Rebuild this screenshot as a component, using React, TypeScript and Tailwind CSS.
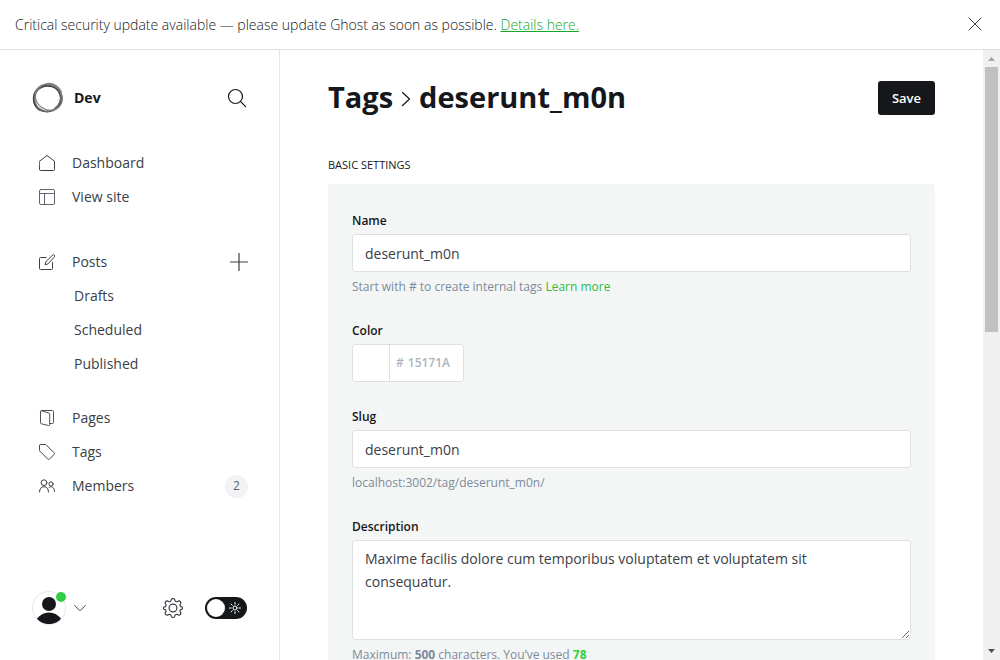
import { useState, type ReactNode } from "react";

function Svg({ className, box = "0 0 16 16", children }: { className: string; box?: string; children: ReactNode }) {
  return (
    <svg
      className={className}
      viewBox={box}
      fill="none"
      stroke="currentColor"
      strokeWidth="1"
      strokeLinecap="round"
      strokeLinejoin="round"
      aria-hidden="true"
    >
      {children}
    </svg>
  );
}

const HomeIcon = () => (
  <Svg className="h-4 w-4 text-[#394047]">
    <path d="M.5 6.2 8 .5l7.500 5.700V14.500a1 1 0 0 1-1 1h-13a1 1 0 0 1-1-1z" />
  </Svg>
);

const LayoutIcon = () => (
  <Svg className="h-4 w-4 text-[#5d6670]">
    <rect x=".5" y=".5" width="15" height="15" rx="1.5" />
    <path d="M.5 4.500h15M5.500 4.500v11" />
  </Svg>
);

const EditIcon = () => (
  <Svg className="h-4 w-4 text-[#394047]">
    <path d="M7 3.500H1.500a1 1 0 0 0-1 1v10a1 1 0 0 0 1 1h11a1 1 0 0 0 1-1V8.500" />
    <path d="m8.700 10-2.600.8.600-2.800 6.800-6.900a1.250 1.250 0 0 1 1.900 1.900z" />
  </Svg>
);

const PagesIcon = () => (
  <Svg className="h-4 w-4 text-[#4a525a]">
    <path d="M2.500.5h11a1 1 0 0 1 1 1v11a1 1 0 0 1-1 1h-2.500" />
    <path d="M1.500 1.300v11.500a1 1 0 0 0 .8 1l7.200 1.700a1 1 0 0 0 1.200-1V4a1 1 0 0 0-.8-1L2.700.8a1 1 0 0 0-1.200.5z" />
  </Svg>
);

const TagIcon = () => (
  <Svg className="h-4 w-4 text-[#394047]">
    <path d="M.5 1.500a1 1 0 0 1 1-1h4.700a1.500 1.500 0 0 1 1 .4l8 8a1 1 0 0 1 0 1.400l-4.900 4.900a1 1 0 0 1-1.400 0l-8-8a1.500 1.500 0 0 1-.4-1z" />
  </Svg>
);

const MembersIcon = () => (
  <Svg className="h-4 w-4 text-[#394047]">
    <circle cx="5" cy="4.700" r="2.900" />
    <path d="M.5 14c0-3.200 1.700-5.300 4.500-5.300S9.500 10.800 9.500 14" />
    <circle cx="12" cy="6" r="2.100" />
    <path d="M10 9.700c.6-.7 1.200-1 2-1 2.100 0 3.500 1.700 3.500 4.800" />
  </Svg>
);

const GearIcon = () => (
  <Svg className="h-5 w-5 text-[#394047]" box="0 0 20 20">
    <g strokeWidth="1.200">
      <circle cx="10" cy="10" r="3.900" />
      <path d="M8.300 1.700a1.800 1.800 0 0 1 3.400 0l.2.700a1.800 1.800 0 0 0 2.600 1.100l.7-.4a1.800 1.800 0 0 1 2.400 2.400l-.4.700a1.800 1.800 0 0 0 1.100 2.600l.7.200a1.100 1.100 0 0 1 0 2.100l-.7.200a1.800 1.800 0 0 0-1.100 2.600l.4.700a1.800 1.800 0 0 1-2.400 2.400l-.7-.4a1.800 1.800 0 0 0-2.600 1.100l-.2.700a1.800 1.800 0 0 1-3.400 0l-.2-.7a1.800 1.800 0 0 0-2.600-1.100l-.7.400a1.800 1.800 0 0 1-2.400-2.400l.4-.7a1.800 1.800 0 0 0-1.100-2.600l-.7-.2a1.100 1.100 0 0 1 0-2.100l.7-.2a1.800 1.800 0 0 0 1.100-2.600l-.4-.7a1.800 1.800 0 0 1 2.400-2.400l.7.400a1.800 1.800 0 0 0 2.600-1.100z" />
    </g>
  </Svg>
);

const SiteLogo = () => (
  <svg className="h-8 w-8" viewBox="0 0 32 32" fill="none" aria-hidden="true">
    <path d="M15 2.500c6-.8 12 2.500 14.200 8.500" stroke="#aaa" strokeWidth="3" />
    <path d="M29.300 13c.7 5.500-1.800 10.500-6.300 13.500" stroke="#999" strokeWidth="2.400" />
    <ellipse cx="15.500" cy="16.300" rx="13.800" ry="13.200" stroke="#555" strokeWidth="1.900" />
    <ellipse cx="15" cy="16.900" rx="13.600" ry="12.600" stroke="#444" strokeWidth="1.200" transform="rotate(-25 15 16.900)" />
    <ellipse cx="16.800" cy="15.200" rx="14.200" ry="12.500" stroke="#888" strokeWidth="1.200" transform="rotate(38 16.800 15.200)" />
    <ellipse cx="16" cy="15.600" rx="12.600" ry="14.300" stroke="#777" strokeWidth=".9" transform="rotate(25 16 15.600)" />
  </svg>
);

function NavItem({ icon, label, extra }: { icon: ReactNode; label: string; extra?: ReactNode }) {
  return (
    <li className="flex h-[34px] items-center pl-[39px] pr-[31px]">
      <a href="#" className="flex flex-1 items-center gap-[17px]">
        {icon}
        <span className="pb-0.5">{label}</span>
      </a>
      {extra}
    </li>
  );
}

function SubItem({ label }: { label: string }) {
  return (
    <li className="flex h-[34px] items-center pl-[74px]">
      <a href="#" className="pb-0.5">{label}</a>
    </li>
  );
}

function Sidebar() {
  const [night, setNight] = useState(false);
  return (
    <nav className="flex w-[280px] shrink-0 flex-col border-r border-[#e5e7e9] text-[14px]">
      <header className="flex h-24 items-center pl-8 pr-8">
        <SiteLogo />
        <span className="ml-[10px] flex-1 pb-0.5 text-[14px] font-bold text-[#15171a]">Dev</span>
        <button type="button" aria-label="Search">
          <Svg className="h-5 w-5 text-[#15171a]" box="0 0 20 20">
            <circle cx="8.500" cy="8.500" r="7" strokeWidth="1.200" />
            <path d="m13.600 13.600 5 5" strokeWidth="1.300" />
          </Svg>
        </button>
      </header>

      <ul>
        <NavItem icon={<HomeIcon />} label="Dashboard" />
        <NavItem icon={<LayoutIcon />} label="View site" />
      </ul>
      <ul className="mt-[31px]">
        <NavItem
          icon={<EditIcon />}
          label="Posts"
          extra={
            <button type="button" aria-label="New post">
              <Svg className="h-[18px] w-[18px] text-[#394047]" box="0 0 18 18">
                <path d="M9 .5v17M.5 9h17" strokeWidth="1.200" />
              </Svg>
            </button>
          }
        />
        <SubItem label="Drafts" />
        <SubItem label="Scheduled" />
        <SubItem label="Published" />
      </ul>
      <ul className="mt-5">
        <NavItem icon={<PagesIcon />} label="Pages" />
        <NavItem icon={<TagIcon />} label="Tags" />
        <NavItem
          icon={<MembersIcon />}
          label="Members"
          extra={
            <span className="flex h-[23px] w-[23px] items-center justify-center rounded-full bg-[#f1f3f4] text-[12px] font-medium text-[#5d6670]">
              2
            </span>
          }
        />
      </ul>

      <footer className="mt-auto flex h-[104px] items-center pl-8 pr-8">
        <button type="button" aria-label="Account" className="flex items-center gap-2">
          <svg className="h-9 w-[34px]" viewBox="0 0 34 36" aria-hidden="true">
            <circle cx="17" cy="18" r="16.500" fill="#fff" stroke="#e5e7e9" />
            <circle cx="17" cy="14" r="7" fill="#15171a" />
            <path d="M5 28.500C8.500 24.500 12 22.500 17 22.500s8.500 2 12 6C26 32.500 21.500 34 17 34S8 32.500 5 28.500z" fill="#15171a" />
            <circle cx="29" cy="7" r="5" fill="#30cf43" />
          </svg>
          <Svg className="h-3 w-3 text-[#394047]" box="0 0 12 12">
            <path d="m.7 3.500 5.300 5.300 5.300-5.300" />
          </Svg>
        </button>
        <a href="#" aria-label="Settings" className="ml-auto">
          <GearIcon />
        </a>
        <button
          type="button"
          role="switch"
          aria-checked={night}
          aria-label="Night shift"
          onClick={() => setNight(!night)}
          className="ml-[22px] flex h-[22px] w-[42px] items-center justify-between rounded-full bg-[#15171a] pl-[2px] pr-[6px]"
        >
          <span className="h-[18px] w-[18px] rounded-full bg-white" />
          <Svg className="h-3 w-3 text-white" box="0 0 12 12">
            <circle cx="6" cy="6" r="2" />
            <path d="M6 .5v1.700M6 9.800v1.700M.5 6h1.700M9.800 6h1.700M2.100 2.100l1.200 1.200M8.700 8.700l1.200 1.200M9.900 2.100 8.700 3.300M3.300 8.700 2.100 9.900" />
          </Svg>
        </button>
      </footer>
    </nav>
  );
}

function Scrollbar() {
  return (
    <div className="flex w-[17px] shrink-0 flex-col items-center justify-between bg-[#f0f0f0]" aria-hidden="true">
      <div className="flex flex-1 flex-col items-center">
        <svg className="h-[17px] w-[17px]" viewBox="0 0 17 17">
          <path d="M5 11h7L8.500 7z" fill="#a3a3a3" />
        </svg>
        <div className="h-[265px] w-[13px] bg-[#c1c1c1]" />
      </div>
      <svg className="h-[17px] w-[17px]" viewBox="0 0 17 17">
        <path d="M5 6h7l-3.500 4z" fill="#505050" />
      </svg>
    </div>
  );
}

const labelClass = "mb-[3px] block text-[12px] leading-5 font-semibold text-[#15171a]";
const inputClass =
  "block h-[38px] w-full rounded-[3px] border border-[#dddfe1] bg-white px-3 text-[14px] text-[#394047] outline-none";
const helpClass = "mt-[6px] text-[12px] leading-[18px] text-[#7c8b9a]";

function TagForm() {
  return (
    <div className="flex flex-col gap-[25px] rounded-t-[3px] bg-[#f4f6f6] px-6 pt-[27px] pb-10">
      <div>
        <label htmlFor="tag-name" className={labelClass}>Name</label>
        <input id="tag-name" type="text" defaultValue="deserunt_m0n" className={inputClass} />
        <p className={helpClass}>
          Start with # to create internal tags{" "}
          <a href="#" className="text-[#30b941]">Learn more</a>
        </p>
      </div>
      <div>
        <label htmlFor="tag-color" className={labelClass}>Color</label>
        <div className="flex h-[38px] w-28 overflow-hidden rounded-[3px] border border-[#dddfe1] bg-white">
          <span className="w-[37px] shrink-0 border-r border-[#dddfe1]" />
          <span className="flex min-w-0 flex-1 items-center gap-1 pl-[6px] text-[12px] font-semibold text-[#abb4be]">
            #
            <input
              id="tag-color"
              type="text"
              placeholder="15171A"
              className="w-full min-w-0 bg-transparent outline-none placeholder:text-[#abb4be]"
            />
          </span>
        </div>
      </div>
      <div>
        <label htmlFor="tag-slug" className={labelClass}>Slug</label>
        <input id="tag-slug" type="text" defaultValue="deserunt_m0n" className={inputClass} />
        <p className={helpClass}>localhost:3002/tag/deserunt_m0n/</p>
      </div>
      <div>
        <label htmlFor="tag-description" className={labelClass}>Description</label>
        <textarea
          id="tag-description"
          defaultValue="Maxime facilis dolore cum temporibus voluptatem et voluptatem sit consequatur."
          className="block h-[100px] w-full resize rounded-[3px] border border-[#dddfe1] bg-white py-[6px] pr-5 pl-3 text-[14px] leading-[23px] text-[#394047] outline-none"
        />
        <p className={helpClass}>
          Maximum: <b>500</b> characters. You’ve used <b className="text-[#30cf43]">78</b>
        </p>
      </div>
    </div>
  );
}

export default function App() {
  return (
    <div className="flex h-screen flex-col bg-white font-['Open_Sans','Noto_Sans',sans-serif] text-[#394047]">
      <aside className="flex h-[50px] shrink-0 items-center justify-between border-b border-[#dddfe1] pl-[15px] pr-[18px] text-[14px] font-light text-[#15171a]">
        <p>
          Critical security update available — please update Ghost as soon as possible.{" "}
          <a href="#" className="text-[#18a52b] underline">Details here.</a>
        </p>
        <button type="button" aria-label="Close" className="pb-0.5">
          <Svg className="h-[14px] w-[14px] text-[#394047]" box="0 0 14 14">
            <path d="m1 1 12 12M13 1 1 13" />
          </Svg>
        </button>
      </aside>
      <div className="flex min-h-0 flex-1">
        <Sidebar />
        <main className="min-w-0 flex-1 overflow-y-auto px-12 [scrollbar-width:none]">
          <header className="flex h-24 items-center justify-between">
            <h1 className="flex items-center pb-0.5 text-[29px] font-bold text-[#15171a]">
              <a href="#">Tags</a>
              <Svg className="mx-2 mt-1 h-4 w-[10px]" box="0 0 10 16">
                <path d="m1.500 1.500 7 6.500-7 6.500" strokeWidth="1.200" />
              </Svg>
              deserunt_m0n
            </h1>
            <button type="button" className="h-[34px] rounded-[3px] bg-[#15171a] px-[14px] pt-0.5 text-[13px] font-semibold text-white">
              Save
            </button>
          </header>
          <h2 className="mt-[9px] mb-[9px] text-[11px] leading-5 text-[#15171a] uppercase">Basic settings</h2>
          <TagForm />
        </main>
        <Scrollbar />
      </div>
    </div>
  );
}
